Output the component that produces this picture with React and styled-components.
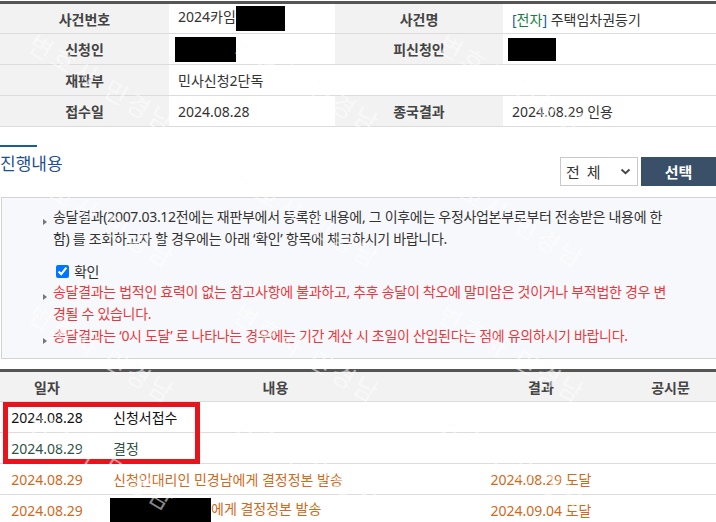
import styled, { createGlobalStyle } from 'styled-components';

const Global = createGlobalStyle`
  html, body {
    margin: 0;
    padding: 0;
    background: #fff;
  }
  body {
    font-family: "Noto Sans", "Noto Sans CJK KR", sans-serif;
    font-size: 14px;
    color: #333;
    overflow: hidden;
  }
`;

const Page = styled.div`
  position: relative;
  width: 716px;
  height: 522px;
  padding-top: 1px;
  box-sizing: border-box;
  overflow: hidden;
`;

const InfoTable = styled.table`
  width: 100%;
  border-collapse: collapse;
  table-layout: fixed;
  border-top: 3px solid #555;
`;

const Row = styled.tr`
  height: 31px;
  border-bottom: 1px solid #dcdcdc;
`;

const Label = styled.th`
  background: ${(p) => (p.blank ? '#fff' : '#f2f2f2')};
  color: #444;
  font-weight: 700;
  text-align: center;
  padding: 0;
`;

const Value = styled.td`
  padding: 0 0 0 9px;
  color: #333;
  white-space: nowrap;
`;

const Redact = styled.span`
  display: inline-block;
  vertical-align: middle;
  width: ${(p) => p.w}px;
  height: ${(p) => p.h || 25}px;
  background: #000;
  margin-left: ${(p) => p.ml || 0}px;
`;

const Tag = styled.span`
  color: #17803f;
  & b {
    font-weight: 400;
    color: #1b5fa8;
  }
`;

const SectionHead = styled.div`
  display: flex;
  justify-content: space-between;
  align-items: flex-start;
  margin-top: 18px;
`;

const TitleBox = styled.div`
  display: flex;
  flex-direction: column;
`;

const Bar = styled.div`
  width: 37px;
  height: 2px;
  background: #1b5aa0;
`;

const Title = styled.h2`
  margin: 5px 0 0;
  font-size: 17px;
  line-height: 24px;
  font-weight: 400;
  color: #1d4f91;
`;

const Controls = styled.div`
  display: flex;
  gap: 3px;
  margin-top: 12px;
`;

const SelectBox = styled.div`
  width: 78px;
  height: 29px;
  box-sizing: border-box;
  border: 1px solid #c9c9c9;
  background: #fff;
  display: flex;
  align-items: center;
  justify-content: space-between;
  padding: 0 6px 0 5px;
  font-size: 15px;
  color: #333;
  word-spacing: 3px;
`;

const Button = styled.button`
  width: 75px;
  height: 29px;
  border: 0;
  background: #3a5069;
  color: #fff;
  font-family: inherit;
  font-size: 15px;
  font-weight: 700;
  padding: 0;
`;

const Notice = styled.div`
  margin: 11px 0 0 1px;
  border: 1px solid #d3d3d3;
  border-right: 0;
  background: #f7f8fb;
  padding: 8px 44px 11px 51px;
  letter-spacing: -0.3px;
  word-break: break-all;
`;

const Item = styled.p`
  position: relative;
  margin: 0;
  line-height: 22px;
  color: ${(p) => (p.red ? '#e9383d' : '#333')};
  &::before {
    content: '';
    position: absolute;
    left: -10px;
    top: 13px;
    border-left: 4px solid #777;
    border-top: 3px solid transparent;
    border-bottom: 3px solid transparent;
  }
`;

const Check = styled.label`
  display: flex;
  align-items: center;
  gap: 5px;
  height: 20px;
  margin: 11px 0 0 3px;
  color: #333;
  & input {
    margin: 0;
    width: 13px;
    height: 13px;
  }
`;

const TableWrap = styled.div`
  position: relative;
  margin-top: 10px;
`;

const ListTable = styled.table`
  width: 100%;
  border-collapse: collapse;
  table-layout: fixed;
  border-top: 3px solid #555;
`;

const ListRow = styled.tr`
  height: 31px;
  border-bottom: 1px solid #dcdcdc;
`;

const Head = styled.th`
  padding: 0;
  background: #f2f2f2;
  color: #444;
  font-weight: 700;
  text-align: center;
`;

const Cell = styled.td`
  padding: 0 0 0 ${(p) => (p.left ? 19 : 0)}px;
  text-align: ${(p) => (p.left ? 'left' : 'center')};
  white-space: nowrap;
  color: ${(p) => p.tone};
`;

const Highlight = styled.div`
  position: absolute;
  left: 3px;
  top: 33px;
  width: 197px;
  height: 62px;
  box-sizing: border-box;
  border: 5px solid #e8141c;
  pointer-events: none;
`;

const Watermark = styled.span`
  position: absolute;
  transform-origin: left center;
  transform: rotate(31deg);
  font-size: 25px;
  letter-spacing: 3px;
  white-space: nowrap;
  color: rgba(255, 255, 255, 0.55);
  -webkit-text-stroke: 0.5px rgba(0, 0, 0, 0.045);
  pointer-events: none;
  z-index: 2;
`;

const tones = {
  black: '#111',
  green: '#2e5343',
  orange: '#cf6a1b',
};

const rows = [
  { date: '2024.08.28', text: '신청서접수', result: '', tone: tones.black },
  { date: '2024.08.29', text: '결정', result: '', tone: tones.green },
  { date: '2024.08.29', text: '신청인대리인 민경남에게 결정정본 발송', result: '2024.08.29 도달', tone: tones.orange },
  { date: '2024.08.29', text: '에게 결정정본 발송', redact: true, result: '2024.09.04 도달', tone: tones.orange },
];

const marks = [];
[22, 157, 292, 400].forEach((y) => {
  [32, 237, 442].forEach((x) => marks.push({ x, y }));
});

function Chevron() {
  return (
    <svg width="11" height="7" viewBox="0 0 11 7">
      <path d="M1.5 1.5 L5.5 5.2 L9.5 1.5" fill="none" stroke="#444" strokeWidth="1.8" />
    </svg>
  );
}

export default function App() {
  return (
    <>
      <Global />
      <Page>
        <InfoTable>
          <colgroup>
            <col style={{ width: 169 }} />
            <col style={{ width: 166 }} />
            <col style={{ width: 168 }} />
            <col />
          </colgroup>
          <tbody>
            <Row>
              <Label>사건번호</Label>
              <Value>
                2024카임<Redact w={49} />
              </Value>
              <Label>사건명</Label>
              <Value>
                <Tag>
                  <b>[</b>전자<b>]</b>
                </Tag>{' '}
                주택임차권등기
              </Value>
            </Row>
            <Row>
              <Label>신청인</Label>
              <Value>
                <Redact w={61} ml={-3} />
              </Value>
              <Label>피신청인</Label>
              <Value>
                <Redact w={48} h={23} ml={-4} />
              </Value>
            </Row>
            <Row>
              <Label>재판부</Label>
              <Value>민사신청2단독</Value>
              <Label as="td" blank />
              <Value />
            </Row>
            <Row>
              <Label>접수일</Label>
              <Value>2024.08.28</Value>
              <Label>종국결과</Label>
              <Value>2024.08.29 인용</Value>
            </Row>
          </tbody>
        </InfoTable>

        <SectionHead>
          <TitleBox>
            <Bar />
            <Title>진행내용</Title>
          </TitleBox>
          <Controls>
            <SelectBox>
              <span>전 체</span>
              <Chevron />
            </SelectBox>
            <Button>선택</Button>
          </Controls>
        </SectionHead>

        <Notice>
          <Item>
            송달결과(2007.03.12전에는 재판부에서 등록한 내용에, 그 이후에는 우정사업본부로부터 전송받은 내용에 한함) 를
            조회하고자 할 경우에는 아래 ‘확인’ 항목에 체크하시기 바랍니다.
          </Item>
          <Check>
            <input type="checkbox" defaultChecked />
            확인
          </Check>
          <Item red>
            송달결과는 법적인 효력이 없는 참고사항에 불과하고, 추후 송달이 착오에 말미암은 것이거나 부적법한 경우 변경될
            수 있습니다.
          </Item>
          <Item red>송달결과는 ‘0시 도달’ 로 나타나는 경우에는 기간 계산 시 초일이 산입된다는 점에 유의하시기 바랍니다.</Item>
        </Notice>

        <TableWrap>
          <ListTable>
            <colgroup>
              <col style={{ width: 94 }} />
              <col style={{ width: 363 }} />
              <col style={{ width: 168 }} />
              <col />
            </colgroup>
            <thead>
              <ListRow>
                <Head>일자</Head>
                <Head>내용</Head>
                <Head>결과</Head>
                <Head>공시문</Head>
              </ListRow>
            </thead>
            <tbody>
              {rows.map((r, i) => (
                <ListRow key={i}>
                  <Cell tone={r.tone}>{r.date}</Cell>
                  <Cell left tone={r.tone}>
                    {r.redact && <Redact w={101} h={24} ml={-3} />}
                    {r.text}
                  </Cell>
                  <Cell tone={r.tone}>{r.result}</Cell>
                  <Cell tone={r.tone} />
                </ListRow>
              ))}
            </tbody>
          </ListTable>
          <Highlight />
        </TableWrap>

        {marks.map((m, i) => (
          <Watermark key={i} style={{ left: m.x, top: m.y }}>
            변호사 민경남
          </Watermark>
        ))}
      </Page>
    </>
  );
}
